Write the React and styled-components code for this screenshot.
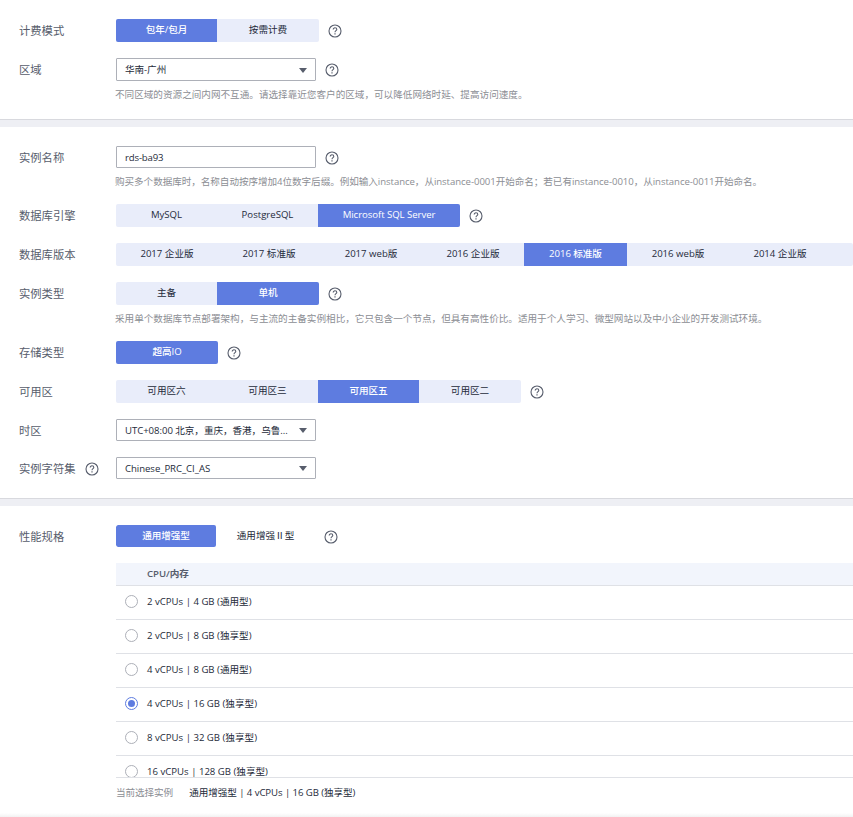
import React, { useState } from 'react'
import styled, { createGlobalStyle, css } from 'styled-components'

const GlobalStyle = createGlobalStyle`
* {
    box-sizing: border-box;
}
body {
    margin: 0;
    background-color: #fff;
    color: #252b3a;
    font-family: "Open Sans", "Noto Sans CJK SC", sans-serif;
    font-size: 9.6px;
    overflow: hidden;
}
`;
const Page = styled.div`
display: flex;
flex-direction: column;
height: 817px;
overflow: hidden;
`;
const Section = styled.section`
display: flex;
flex-direction: column;
flex: none;
height: ${props => props.$height}px;
padding: 19px 0 0 19px;
`;
const Divider = styled.div`
flex: none;
height: 8px;
background-color: #eeeff4;
border-top: 1px solid #d8d9de;
`;
const Row = styled.div`
display: flex;
align-items: center;
flex: none;
height: ${props => props.$height || 23}px;
margin-bottom: ${props => props.$gap === undefined ? 16 : props.$gap}px;
`;
const Label = styled.div`
display: flex;
align-items: center;
flex: none;
gap: 9px;
width: 97px;
padding-top: 1px;
font-size: 11.3px;
line-height: 22px;
color: #575d6c;
white-space: nowrap;
`;
const Hint = styled.p`
flex: none;
height: 14px;
margin: 0 0 ${props => props.$gap}px 96px;
font-size: 9.6px;
line-height: 14px;
letter-spacing: ${props => props.$tight ? '-0.06px' : 'normal'};
color: #8c8e94;
white-space: nowrap;
`;
const Group = styled.div`
display: flex;
flex: ${props => props.$fill ? '1' : 'none'};
height: 100%;
border-radius: 2px;
overflow: hidden;
background-color: ${props => props.$plain ? 'transparent' : '#e9edfa'};
`;
const Option = styled.button`
flex: none;
width: ${props => props.$width}px;
height: 100%;
padding: 0 0 ${props => props.$plain ? 0 : 1}px;
border: none;
border-radius: ${props => props.$plain ? 2 : 0}px;
background-color: transparent;
color: #252b3a;
font-family: inherit;
font-size: 9.6px;
line-height: 20px;
white-space: nowrap;
cursor: pointer;
${props => props.$active && css`
    background-color: #5e7ce0;
    color: #fff;
    font-weight: 500;
    letter-spacing: -0.05px;
`}
`;
const Select = styled.div`
display: flex;
align-items: center;
justify-content: space-between;
flex: none;
width: 200px;
height: 100%;
padding: 1px 8px 0;
border: 1px solid #adb0b8;
border-radius: 1px;
line-height: 18px;
letter-spacing: -0.05px;
white-space: nowrap;
cursor: pointer;
`;
const Arrow = styled.span`
border: 4px solid transparent;
border-top: 5px solid #575d6c;
border-bottom: none;
`;
const Input = styled.input`
width: 200px;
height: 100%;
padding: 0 8px;
border: 1px solid #adb0b8;
border-radius: 1px;
outline: none;
color: #252b3a;
font-family: inherit;
font-size: 9.6px;
letter-spacing: -0.15px;
`;
const HelpIcon = styled.svg`
flex: none;
width: 14px;
height: 14px;
margin: ${props => props.$inLabel ? '0' : '1px 0 0 9px'};
fill: none;
stroke: #575d6c;
`;
const Table = styled.div`
flex: none;
height: 215px;
margin-left: 97px;
overflow: hidden;
border-bottom: 1px solid #dfe1e6;
`;
const TableHead = styled.div`
height: 23px;
padding-left: 31px;
background-color: #f2f5fc;
border-bottom: 1px solid #dfe1e6;
color: #575d6c;
font-weight: 600;
line-height: 22px;
letter-spacing: -0.05px;
`;
const TableRow = styled.label`
display: flex;
align-items: center;
gap: 9px;
height: 34px;
padding: 0 0 2px 9px;
border-bottom: 1px solid #dfe1e6;
line-height: 15px;
white-space: nowrap;
cursor: pointer;
`;
const Radio = styled.span`
display: flex;
align-items: center;
justify-content: center;
width: 13px;
height: 13px;
border: 1px solid ${props => props.$checked ? '#5e7ce0' : '#adb0b8'};
border-radius: 50%;
&::after {
    content: "";
    width: 7px;
    height: 7px;
    border-radius: 50%;
    background-color: ${props => props.$checked ? '#5e7ce0' : 'transparent'};
}
`;
const Summary = styled.div`
display: flex;
flex: none;
gap: 16px;
margin: 7px 0 0 97px;
line-height: 16px;
letter-spacing: -0.07px;
white-space: nowrap;
`;
const SummaryLabel = styled.span`
color: #8c8e94;
`;
const BottomShade = styled.div`
flex: none;
height: 4px;
background: linear-gradient(#fff, #f2f2f2);
`;

const engines = [['MySQL', 101], ['PostgreSQL', 101], ['Microsoft SQL Server', 142]]
const versions = [
    ['2017 企业版', 102], ['2017 标准版', 102], ['2017 web版', 102], ['2016 企业版', 102],
    ['2016 标准版', 103], ['2016 web版', 102], ['2014 企业版', 102]
]
const zones = [['可用区六', 101], ['可用区三', 101], ['可用区五', 101], ['可用区二', 102]]
const specs = [
    '2 vCPUs | 4 GB (通用型)',
    '2 vCPUs | 8 GB (独享型)',
    '4 vCPUs | 8 GB (通用型)',
    '4 vCPUs | 16 GB (独享型)',
    '8 vCPUs | 32 GB (独享型)',
    '16 vCPUs | 128 GB (独享型)'
]

function Help({ inLabel }) {
    return (
        <HelpIcon viewBox="0 0 14 14" $inLabel={inLabel}>
            <circle cx="7" cy="7" r="6" strokeWidth="1.1" />
            <path d="M5.2 5.6C5.2 4.5 5.9 3.8 7 3.8S8.8 4.5 8.8 5.4C8.8 6.6 7 6.7 7 8.2" strokeWidth="1.1" />
            <path d="M7 9.2V10.4" strokeWidth="1.2" />
        </HelpIcon>
    )
}

function Options({ items, initial, plain, fill }) {
    const [value, setValue] = useState(initial)
    return (
        <Group $plain={plain} $fill={fill}>
            {items.map(([text, width]) => (
                <Option key={text} $width={width} $plain={plain} $active={text === value} onClick={() => setValue(text)}>
                    {text}
                </Option>
            ))}
        </Group>
    )
}

function App() {
    const [name, setName] = useState('rds-ba93')
    const [spec, setSpec] = useState(specs[3])
    return (
        <Page>
            <GlobalStyle />
            <Section $height={119}>
                <Row>
                    <Label>计费模式</Label>
                    <Options items={[['包年/包月', 101], ['按需计费', 102]]} initial="包年/包月" />
                    <Help />
                </Row>
                <Row $gap={7}>
                    <Label>区域</Label>
                    <Select>华南-广州<Arrow /></Select>
                    <Help />
                </Row>
                <Hint $gap={0}>不同区域的资源之间内网不互通。请选择靠近您客户的区域，可以降低网络时延、提高访问速度。</Hint>
            </Section>
            <Divider />
            <Section $height={371}>
                <Row $height={22} $gap={7}>
                    <Label>实例名称</Label>
                    <Input value={name} onChange={(e) => setName(e.target.value)} />
                    <Help />
                </Row>
                <Hint $gap={15} $tight>购买多个数据库时，名称自动按序增加4位数字后缀。例如输入instance，从instance-0001开始命名；若已有instance-0010，从instance-0011开始命名。</Hint>
                <Row>
                    <Label>数据库引擎</Label>
                    <Options items={engines} initial="Microsoft SQL Server" />
                    <Help />
                </Row>
                <Row>
                    <Label>数据库版本</Label>
                    <Options items={versions} initial="2016 标准版" fill />
                </Row>
                <Row $gap={7}>
                    <Label>实例类型</Label>
                    <Options items={[['主备', 101], ['单机', 102]]} initial="单机" />
                    <Help />
                </Row>
                <Hint $gap={15}>采用单个数据库节点部署架构，与主流的主备实例相比，它只包含一个节点，但具有高性价比。适用于个人学习、微型网站以及中小企业的开发测试环境。</Hint>
                <Row>
                    <Label>存储类型</Label>
                    <Options items={[['超高IO', 102]]} initial="超高IO" />
                    <Help />
                </Row>
                <Row>
                    <Label>可用区</Label>
                    <Options items={zones} initial="可用区五" />
                    <Help />
                </Row>
                <Row $height={22}>
                    <Label>时区</Label>
                    <Select>UTC+08:00 北京，重庆，香港，乌鲁...<Arrow /></Select>
                </Row>
                <Row $height={22}>
                    <Label>实例字符集<Help inLabel /></Label>
                    <Select>Chinese_PRC_CI_AS<Arrow /></Select>
                </Row>
            </Section>
            <Divider />
            <Section $height={307}>
                <Row $height={22}>
                    <Label>性能规格</Label>
                    <Options plain items={[['通用增强型', 100], ['通用增强Ⅱ型', 99]]} initial="通用增强型" />
                    <Help />
                </Row>
                <Table>
                    <TableHead>CPU/内存</TableHead>
                    {specs.map((item) => (
                        <TableRow key={item} onClick={() => setSpec(item)}>
                            <Radio $checked={item === spec} />
                            <span>{item}</span>
                        </TableRow>
                    ))}
                </Table>
                <Summary>
                    <SummaryLabel>当前选择实例</SummaryLabel>
                    <span>通用增强型 | {spec}</span>
                </Summary>
            </Section>
            <BottomShade />
        </Page>
    )
}

export default App
